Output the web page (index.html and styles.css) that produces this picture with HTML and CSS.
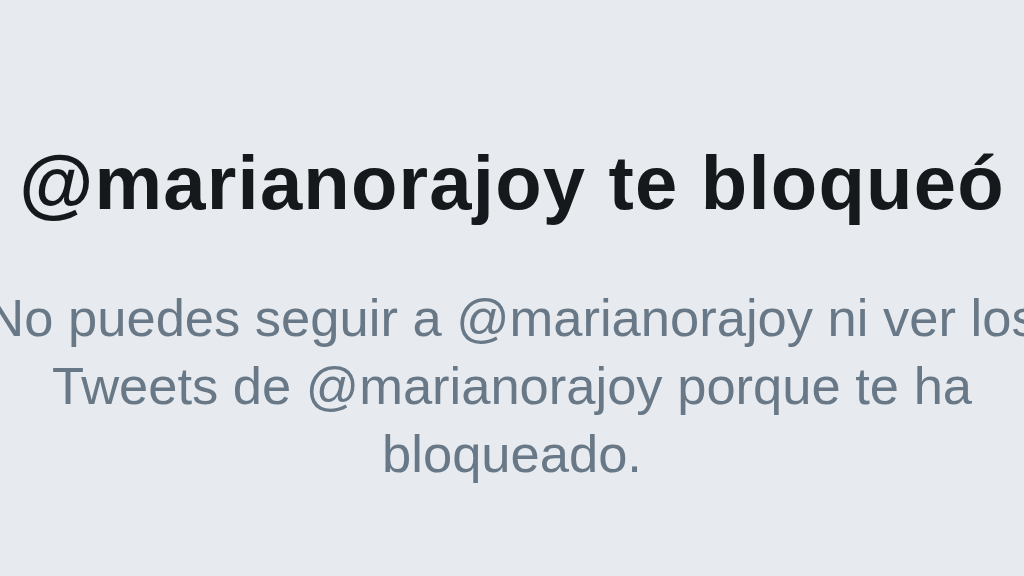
FILE: index.html
```html
<!DOCTYPE html>
<html lang="es">
<head>
<meta charset="utf-8">
<link rel="stylesheet" href="styles.css">
</head>
<body>
<main class="blocked">
  <h1 class="blocked-title">@marianorajoy te bloqueó</h1>
  <p class="blocked-text">No puedes seguir a @marianorajoy ni ver los<br>Tweets de @marianorajoy porque te ha<br>bloqueado.</p>
</main>
</body>
</html>
```
FILE: styles.css
```css
html, body {
  margin: 0;
  padding: 0;
  height: 100%;
  overflow: hidden;
  background: #e7ebef;
}
.blocked {
  display: flex;
  flex-direction: column;
  align-items: center;
  padding-top: 138px;
  font-family: "Liberation Sans", Arial, sans-serif;
}
.blocked-title {
  margin: 0;
  font-size: 76px;
  line-height: 90px;
  font-weight: 700;
  color: #16191c;
  white-space: nowrap;
  letter-spacing: 1.2px;
}
.blocked-text {
  margin: 56px 0 0;
  font-size: 52.5px;
  line-height: 68px;
  color: #687887;
  text-align: center;
  white-space: nowrap;
}
```
